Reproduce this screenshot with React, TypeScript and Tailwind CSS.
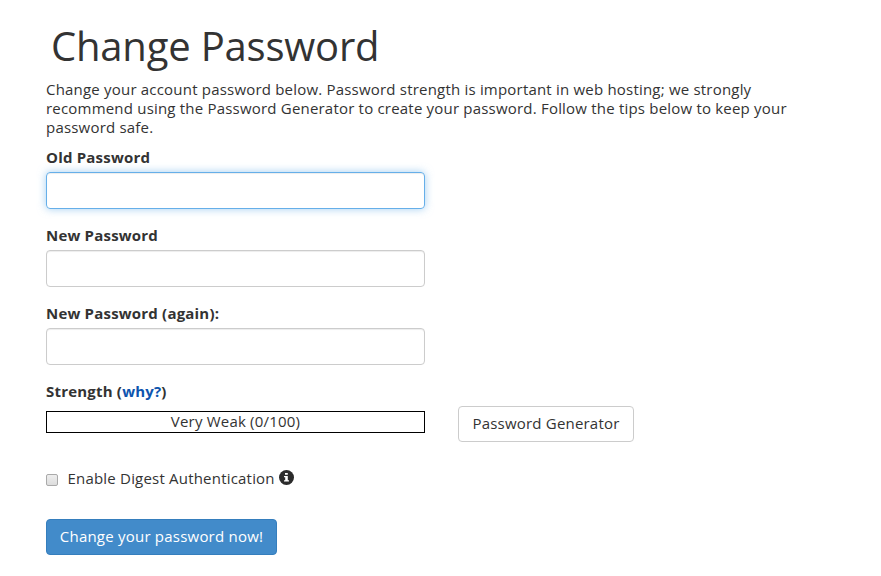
import { useState } from 'react';

const FIELDS = [
  { id: 'old', label: 'Old Password', active: true },
  { id: 'new', label: 'New Password', active: false },
  { id: 'again', label: 'New Password (again):', active: false },
];

function PasswordField({ id, label, active }: { id: string; label: string; active: boolean }) {
  return (
    <div className="mb-[17px]">
      <label htmlFor={id} className="mb-[5px] block h-[19px] font-bold">
        {label}
      </label>
      <input
        id={id}
        type="password"
        className={
          active
            ? 'block h-[37px] w-[379px] rounded-[4px] border border-[#66afe9] px-3 shadow-[inset_0_1px_1px_rgba(0,0,0,0.075),0_0_8px_rgba(102,175,233,0.6)] outline-none'
            : 'block h-[37px] w-[379px] rounded-[4px] border border-[#ccc] px-3 shadow-[inset_0_1px_1px_rgba(0,0,0,0.075)] outline-none'
        }
      />
    </div>
  );
}

export default function App() {
  const [digest, setDigest] = useState(false);
  const score = 0;

  return (
    <main className="h-[576px] w-[881px] overflow-hidden bg-white pl-[46px] pt-[22px] font-['Open_Sans',sans-serif] text-[15px] leading-[19px] tracking-[0.2px] text-[#333]">
      <h1 className="mb-[11px] ml-[5px] h-[47px] text-[40px] leading-[47px] tracking-[-0.2px]">Change Password</h1>
      <p className="mb-[11px] w-[760px]">
        Change your account password below. Password strength is important in web hosting; we strongly
        <br />
        recommend using the Password Generator to create your password. Follow the tips below to keep your
        <br />
        password safe.
      </p>

      {FIELDS.map((field) => (
        <PasswordField key={field.id} {...field} />
      ))}

      <div className="font-bold">
        Strength (<a className="text-[#0d54ae]">why?</a>)
      </div>
      <div className="mt-[5px] flex items-start gap-[33px]">
        <div className="mt-[5px] h-[22px] w-[379px] border border-black text-center leading-[19px]">
          Very Weak ({score}/100)
        </div>
        <button className="h-[36px] w-[176px] rounded-[4px] border border-[#ccc] bg-white pb-[2px]">
          Password Generator
        </button>
      </div>

      <label className="mt-[27px] flex h-[19px] items-center">
        <input
          type="checkbox"
          checked={digest}
          onChange={(e) => setDigest(e.target.checked)}
          className="mt-[3px] size-3 appearance-none rounded-[2px] border border-[#aaa] bg-linear-to-b from-[#eee] to-[#ddd]"
        />
        <span className="ml-[9.5px]">Enable Digest Authentication</span>
        <svg viewBox="0 0 14 14" className="mb-[3px] ml-[4px] size-[15px]">
          <circle cx="7" cy="7" r="7" fill="#2b2b2b" />
          <path d="M5.6 2.8h2.6v1.7H5.6zM4.7 5.6h3.5v3.9h1.1v1.2H4.7V9.5h1.1V6.8H4.7z" fill="#fff" />
        </svg>
      </label>

      <button className="mt-[31px] h-[36px] w-[231px] rounded-[4px] border border-[#357ebd] bg-[#428bca] pb-[2px] tracking-[0.22px] text-white">
        Change your password now!
      </button>
    </main>
  );
}
